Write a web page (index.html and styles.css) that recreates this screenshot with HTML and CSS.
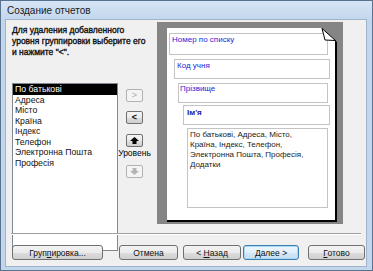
FILE: index.html
```html
<!DOCTYPE html>
<html>
<head>
<meta charset="utf-8">
<link rel="stylesheet" href="styles.css">
</head>
<body>
<div class="window">
  <div class="titlebar">Создание отчетов</div>
  <div class="client">
    <div class="main">
      <div class="leftcol">
        <div class="instr">Для удаления добавленного<br>уровня группировки выберите его<br>и нажмите "&lt;".</div>
        <div class="listrow">
          <div class="listbox">
            <div class="item sel">По батькові</div>
            <div class="item">Адреса</div>
            <div class="item">Місто</div>
            <div class="item">Країна</div>
            <div class="item">Індекс</div>
            <div class="item">Телефон</div>
            <div class="item">Электронна Пошта</div>
            <div class="item">Професія</div>
          </div>
          <div class="btncol">
            <div class="sbtn dis b1">&gt;</div>
            <div class="sbtn b2"><b>&lt;</b></div>
            <div class="sbtn b3"><svg width="9" height="7" viewBox="0 0 9 7"><polygon points="4.5,0 9,4 6.5,4 6.5,7 2.5,7 2.5,4 0,4" fill="#000"/></svg></div>
            <div class="lvl">Уровень</div>
            <div class="sbtn dis b4"><svg width="9" height="7" viewBox="0 0 9 7"><polygon points="2.5,0 6.5,0 6.5,3 9,3 4.5,7 0,3 2.5,3" fill="#b4b4b4"/></svg></div>
          </div>
        </div>
      </div>
      <div class="preview">
        <div class="page">
          <svg class="fold" width="16" height="14" viewBox="0 0 16 14">
            <polygon points="0,0 16,0 16,14" fill="#858585"/>
            <polygon points="1,0.5 14.5,12.5 4,12" fill="#fff" stroke="#000" stroke-width="1"/>
          </svg>
          <div class="fld f1">Номер по списку</div>
          <div class="fld f2">Код учня</div>
          <div class="fld f3">Прізвище</div>
          <div class="fld f4">Ім'я</div>
          <div class="fld f5">По батькові, Адреса, Місто,<br>Країна, Індекс, Телефон,<br>Электронна Пошта, Професія,<br>Додатки</div>
        </div>
      </div>
    </div>
    <div class="sep"></div>
    <div class="btnrow">
      <div class="btn w-grp"><span>Груп<u>п</u>ировка...</span></div>
      <div class="btn w-cancel"><span>Отмена</span></div>
      <div class="btn w-back"><span>&lt; <u>Н</u>азад</span></div>
      <div class="btn w-next def"><span><u>Д</u>алее &gt;</span></div>
      <div class="btn w-done"><span><u>Г</u>отово</span></div>
    </div>
  </div>
</div>
</body>
</html>
```

FILE: styles.css
```css
* { box-sizing: border-box; }
html, body { margin: 0; padding: 0; }
body {
  width: 373px; height: 271px; overflow: hidden;
  font-family: "Liberation Sans", Arial, sans-serif;
  font-size: 8.5px; color: #000;
  background: #fff;
}
.window {
  width: 373px; height: 271px;
  background: #c2d6ec;
  border: 1px solid #5a7290;
  display: flex; flex-direction: column;
}
.titlebar {
  height: 18px; flex: none;
  padding-left: 6px;
  display: flex; align-items: center;
  font-size: 10px; color: #1a1a1a;
  background: linear-gradient(#d6e5f5, #c3d7ed);
}
.client {
  flex: 1;
  margin: 0 5px 3px 4px;
  background: #f0f0f0;
  border: 1px solid #9fb4cc;
  display: flex; flex-direction: column;
}
.main { display: flex; height: 204px; flex: none; }
.leftcol { width: 151px; padding-left: 6px; display: flex; flex-direction: column; }
.instr {
  margin-top: 5px; line-height: 11px; font-size: 8.5px; color: #111;
  white-space: nowrap;
  -webkit-text-stroke: 0.35px #111;
}
.listrow { display: flex; margin-top: 25px; }
.listbox {
  width: 106px; height: 168px;
  background: #fff; border: 1px solid #828790;
}
.item { height: 10.5px; line-height: 10.5px; padding-left: 2px; white-space: nowrap; color: #111; font-size: 8.7px; }
.item.sel { background: #000; color: #fff; }
.btncol { margin-left: 8px; width: 17px; display: flex; flex-direction: column; align-items: center; }
.sbtn {
  width: 17px; height: 13px; flex: none;
  border: 1px solid #707070; border-radius: 2px;
  background: linear-gradient(#f4f4f4 0%, #ebebeb 50%, #dddddd 51%, #cfcfcf 100%);
  display: flex; align-items: center; justify-content: center;
  font-size: 9px; line-height: 1;
}
.sbtn.dis { border-color: #b0b3b6; background: #f4f4f4; color: #a8a8a8; }
.b1 { margin-top: 6px; }
.b2 { margin-top: 9px; }
.b3 { margin-top: 10px; }
.lvl { margin-top: 1px; line-height: 10px; white-space: nowrap; }
.b4 { margin-top: 7px; }
.preview {
  width: 186px; height: 202px; margin-top: 2px;
  background: #858585;
  padding: 6px 6px 2px 10px;
}
.page {
  position: relative;
  height: 100%;
  background: #fff;
  border-right: 2px solid #000;
  border-bottom: 2px solid #000;
  display: flex; flex-direction: column;
}
.fold { position: absolute; top: 0; right: -2px; }
.fld {
  background: #fff;
  border: 1px solid #c4c4c4;
  color: #2626d9;
  font-size: 8px; line-height: 10px;
  white-space: nowrap;
}
.f1 { margin: 5px 0 0 2px; width: 159px; height: 22px; padding: 1px 0 0 2px; }
.f2 { margin: 4px 0 0 7px; width: 156px; height: 20px; padding: 1px 0 0 2px; }
.f3 { margin: 4px 0 0 11px; width: 150px; height: 20px; padding: 0 0 0 1px; }
.f4 { margin: 2px 0 0 16px; width: 147px; height: 20px; padding: 2px 0 0 3px; font-weight: bold; color: #1a1aa0; }
.f5 { margin: 3px 0 0 20px; width: 141px; height: 80px; padding: 1px 0 0 2px; color: #222; font-size: 8px; }
.sep {
  margin: 9px 5px 0 5px;
  border-top: 1px solid #a0a0a0;
  border-bottom: 1px solid #fff;
}
.btnrow { display: flex; margin-top: 10px; padding-left: 6px; }
.btn {
  height: 15px;
  border: 1px solid #707070; border-radius: 3px;
  background: linear-gradient(#f3f3f3 0%, #ebebeb 50%, #dddddd 51%, #cfcfcf 100%);
  display: flex; align-items: center; justify-content: center;
  font-size: 8.5px; color: #111; white-space: nowrap;
}
.btn.def { border-color: #3c7fb1; box-shadow: inset 0 0 0 1px #a7d8f5; background: linear-gradient(#eef6fc 0%, #e2eff9 50%, #d3e7f6 51%, #c6dff2 100%); }
.w-grp { width: 91px; }
.w-cancel { width: 59px; margin-left: 16px; }
.w-back { width: 58px; margin-left: 5px; }
.w-next { width: 56px; margin-left: 2px; }
.w-done { width: 57px; margin-left: 9px; }
```
